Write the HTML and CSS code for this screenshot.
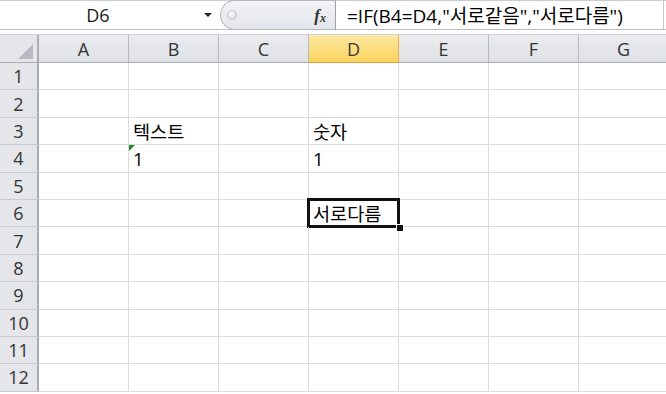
FILE: index.html
```html
<!DOCTYPE html>
<html lang="ko">
<head>
<meta charset="utf-8">
<link rel="stylesheet" href="styles.css">
</head>
<body>
<div class="app">
  <div class="fbar">
    <div class="namebox"><span class="ref">D6</span><span class="arrow"></span></div>
    <div class="grip">
      <span class="knob"></span>
      <span class="fx">f<sub>x</sub></span>
    </div>
    <div class="formula">=IF(B4=D4,"서로같음","서로다름")</div>
  </div>
  <div class="gap"></div>
  <div class="sheet">
    <div class="row head">
      <div class="corner"><span class="tri"></span></div>
      <div class="ch">A</div><div class="ch">B</div><div class="ch">C</div><div class="ch sel">D</div><div class="ch">E</div><div class="ch">F</div><div class="ch">G</div>
    </div>
    <div class="row"><div class="rh">1</div><div class="c"></div><div class="c"></div><div class="c"></div><div class="c"></div><div class="c"></div><div class="c"></div><div class="c"></div></div>
    <div class="row"><div class="rh">2</div><div class="c"></div><div class="c"></div><div class="c"></div><div class="c"></div><div class="c"></div><div class="c"></div><div class="c"></div></div>
    <div class="row"><div class="rh">3</div><div class="c"></div><div class="c">텍스트</div><div class="c"></div><div class="c">숫자</div><div class="c"></div><div class="c"></div><div class="c"></div></div>
    <div class="row"><div class="rh">4</div><div class="c"></div><div class="c warn">1</div><div class="c"></div><div class="c">1</div><div class="c"></div><div class="c"></div><div class="c"></div></div>
    <div class="row"><div class="rh">5</div><div class="c"></div><div class="c"></div><div class="c"></div><div class="c"></div><div class="c"></div><div class="c"></div><div class="c"></div></div>
    <div class="row"><div class="rh">6</div><div class="c"></div><div class="c"></div><div class="c"></div><div class="c active">서로다름</div><div class="c"></div><div class="c"></div><div class="c"></div></div>
    <div class="row"><div class="rh">7</div><div class="c"></div><div class="c"></div><div class="c"></div><div class="c"></div><div class="c"></div><div class="c"></div><div class="c"></div></div>
    <div class="row"><div class="rh">8</div><div class="c"></div><div class="c"></div><div class="c"></div><div class="c"></div><div class="c"></div><div class="c"></div><div class="c"></div></div>
    <div class="row"><div class="rh">9</div><div class="c"></div><div class="c"></div><div class="c"></div><div class="c"></div><div class="c"></div><div class="c"></div><div class="c"></div></div>
    <div class="row"><div class="rh">10</div><div class="c"></div><div class="c"></div><div class="c"></div><div class="c"></div><div class="c"></div><div class="c"></div><div class="c"></div></div>
    <div class="row"><div class="rh">11</div><div class="c"></div><div class="c"></div><div class="c"></div><div class="c"></div><div class="c"></div><div class="c"></div><div class="c"></div></div>
    <div class="row"><div class="rh">12</div><div class="c"></div><div class="c"></div><div class="c"></div><div class="c"></div><div class="c"></div><div class="c"></div><div class="c"></div></div>
  </div>
</div>
</body>
</html>
```

FILE: styles.css
```css
html, body {
  margin: 0;
  padding: 0;
  background: #ffffff;
}
body {
  width: 666px;
  height: 394px;
  overflow: hidden;
  font-family: "Open Sans", "Noto Sans CJK KR", sans-serif;
  color: #000;
}
.app {
  display: flex;
  flex-direction: column;
  width: 666px;
}
.fbar {
  display: flex;
  height: 30px;
  box-sizing: border-box;
  border-top: 1px solid #c9ccd1;
  border-bottom: 1px solid #b9bcc1;
  background: #fff;
}
.namebox {
  width: 220px;
  display: flex;
  align-items: center;
  position: relative;
}
.ref {
  flex: 1;
  text-align: center;
  font-size: 18px;
  padding-right: 8px;
  color: #1a1a1a;
}
.arrow {
  width: 0;
  height: 0;
  border-left: 4px solid transparent;
  border-right: 4px solid transparent;
  border-top: 4px solid #222;
  margin-right: 8px;
}
.grip {
  width: 116px;
  box-sizing: border-box;
  display: flex;
  align-items: center;
  justify-content: space-between;
  background: linear-gradient(#f2f3f5, #e2e5ea);
  border: 1px solid #b5b9bf;
  border-right: 1px solid #9ca1a8;
  border-radius: 15px 0 0 15px;
  margin-top: -1px;
  margin-bottom: -1px;
  padding: 0 9px 0 6px;
}
.knob {
  width: 8px;
  height: 8px;
  border-radius: 50%;
  background: radial-gradient(circle at 40% 35%, #ffffff, #c9ccd1);
  border: 1px solid #c3c6cb;
}
.fx {
  font-family: "Liberation Serif", serif;
  font-style: italic;
  font-weight: bold;
  font-size: 17px;
  color: #333;
  line-height: 1;
}
.fx sub {
  font-size: 12px;
  vertical-align: -1px;
}
.formula {
  flex: 1;
  margin-right: 2px;
  border-right: 1px solid #c6c9ce;
  font-size: 19px;
  padding-left: 11px;
  display: flex;
  align-items: center;
  color: #000;
  white-space: nowrap;
}
.gap {
  height: 5px;
  border-bottom: 1px solid #cfd2d6;
  box-sizing: border-box;
  background: #fff;
}
.sheet {
  display: flex;
  flex-direction: column;
}
.row {
  display: grid;
  grid-template-columns: 39px repeat(7, 90px);
  height: 27.4px;
}
.row.head {
  height: 28px;
}
.corner {
  background: #e4e6ea;
  border-right: 2px solid #a9aeb5;
  border-bottom: 1px solid #a9aeb5;
  box-sizing: border-box;
  position: relative;
}
.tri {
  position: absolute;
  right: 4px;
  bottom: 3px;
  width: 0;
  height: 0;
  border-left: 15px solid transparent;
  border-bottom: 15px solid #b8bcc2;
}
.ch {
  background: linear-gradient(#e9ebee, #dfe2e6);
  border-right: 1px solid #b6bbc2;
  border-bottom: 1px solid #a9aeb5;
  box-sizing: border-box;
  display: flex;
  align-items: center;
  justify-content: center;
  font-size: 18px;
  color: #333;
}
.ch.sel {
  background: linear-gradient(#fde8a2, #fbd45f);
  border-bottom: 1px solid #e49f38;
  border-right: 1px solid #e9b04f;
  color: #3a3a3a;
}
.rh {
  background: #e4e6ea;
  border-right: 2px solid #a9aeb5;
  border-bottom: 1px solid #c9cdd3;
  box-sizing: border-box;
  display: flex;
  align-items: center;
  justify-content: center;
  font-size: 18px;
  color: #333;
}
.c {
  border-right: 1px solid #dadcdd;
  border-bottom: 1px solid #dadcdd;
  box-sizing: border-box;
  font-size: 18.6px;
  line-height: 1;
  display: flex;
  align-items: flex-end;
  padding: 0 0 3px 4px;
  position: relative;
  white-space: nowrap;
  color: #000;
}
.warn::before {
  content: "";
  position: absolute;
  left: 0;
  top: 0;
  width: 0;
  height: 0;
  border-top: 6px solid #1f8a27;
  border-right: 6px solid transparent;
}
.active::after {
  content: "";
  position: absolute;
  left: -2px;
  top: -2px;
  right: -2px;
  bottom: -2px;
  border: 3px solid #111;
}
.active::before {
  content: "";
  position: absolute;
  right: -5px;
  bottom: -5px;
  width: 6px;
  height: 6px;
  background: #111;
  border-left: 1px solid #fff;
  border-top: 1px solid #fff;
  z-index: 2;
}
```
